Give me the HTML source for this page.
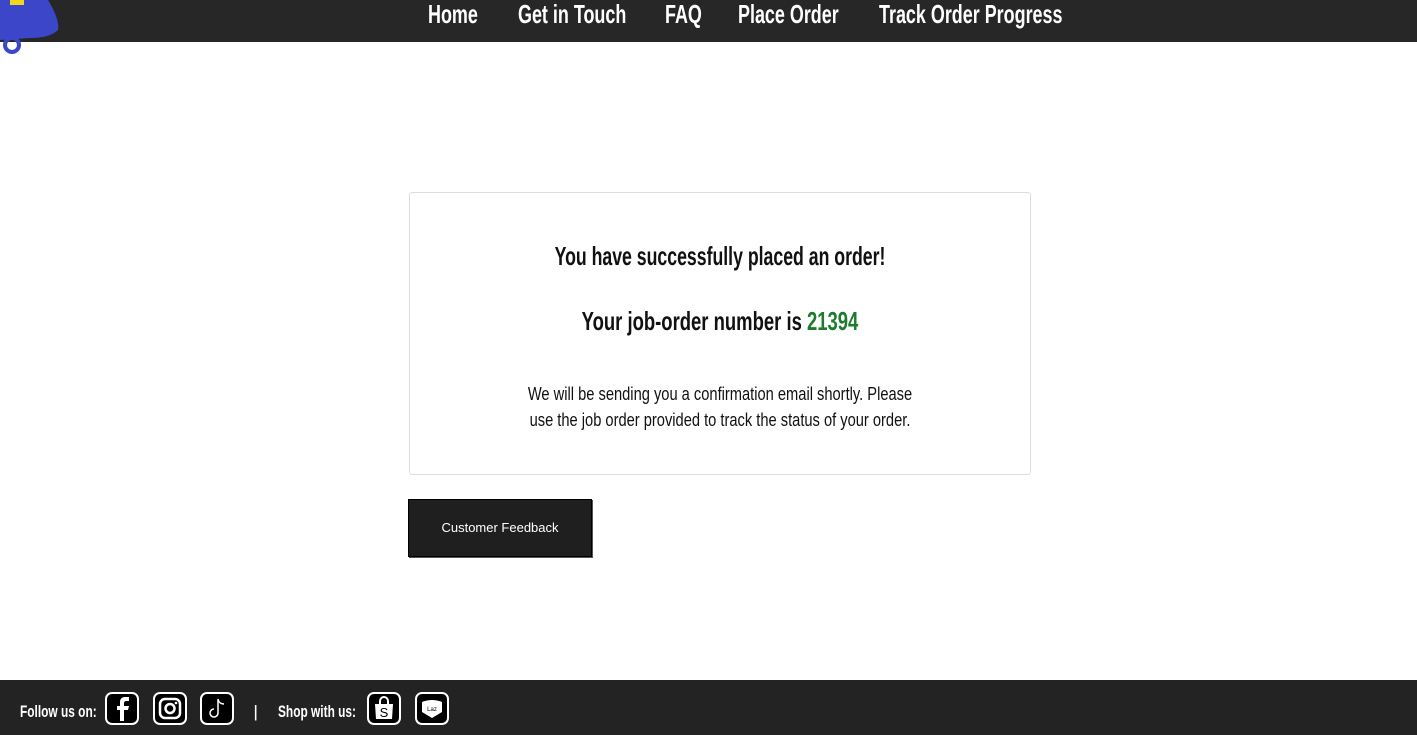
<!DOCTYPE html>
<html><head><style>
body{margin:0;width:1417px;height:735px;background:#fff;position:relative;overflow:hidden;font-family:"Liberation Sans",sans-serif;}
.hdr{position:absolute;left:0;top:0;width:1417px;height:42px;background:#272727;}
.nav{position:absolute;top:-1px;height:30px;line-height:30px;color:#fff;font-weight:bold;font-size:26px;transform:scaleX(0.69);transform-origin:left;white-space:nowrap}
.card{position:absolute;left:409px;top:192px;width:620px;height:281px;border:1px solid #ddd;border-radius:3px;text-align:center;color:#111;}
.c{position:absolute;left:0;width:100%;transform:scaleX(0.72);transform-origin:center;white-space:nowrap}
.t1{top:48px;font-size:26px;font-weight:bold;transform:scaleX(0.68)}
.t2{top:113px;font-size:26px;font-weight:bold;transform:scaleX(0.71)}
.t3{top:188px;font-size:18px;line-height:26px;transform:scaleX(0.815)}
.btn{position:absolute;left:408px;top:499px;width:182px;height:56px;background:#1f1f1f;border:1px solid #000;color:#fff;font-size:13px;line-height:56px;text-align:center;box-shadow:1px 1px 0 #555}
.ftr{position:absolute;left:0;top:680px;width:1417px;height:55px;background:#232323;color:#fff;font-weight:bold;font-size:17px}
.fl{position:absolute;top:22px;transform:scaleX(0.7);transform-origin:left;white-space:nowrap}
.ic{position:absolute;top:692px;width:34px;height:33px;border:2px solid #fff;border-radius:7px;box-sizing:border-box;background:#000}
</style></head><body>
<div class="hdr"></div>
<svg style="position:absolute;left:0;top:0" width="64" height="56"><path d="M0 0 H48 Q60 20 58 30 Q50 38 30 38 L0 40Z" fill="#3b46c9"/><rect x="10" y="0" width="14" height="5" fill="#f2d51d"/><circle cx="12" cy="45" r="7" fill="none" stroke="#3b46c9" stroke-width="4"/></svg>
<div class="nav" style="left:428px">Home</div>
<div class="nav" style="left:518px">Get in Touch</div>
<div class="nav" style="left:665px">FAQ</div>
<div class="nav" style="left:738px">Place Order</div>
<div class="nav" style="left:879px">Track Order Progress</div>
<div class="card">
<div class="c t1">You have successfully placed an order!</div>
<div class="c t2">Your job-order number is <span style="color:#1e7b2e">21394</span></div>
<div class="c t3">We will be sending you a confirmation email shortly. Please<br>use the job order provided to track the status of your order.</div>
</div>
<div class="btn">Customer Feedback</div>
<div class="ftr">
<div class="fl" style="left:20px">Follow us on:</div>
<div class="fl" style="left:254px">|</div>
<div class="fl" style="left:278px">Shop with us:</div>
</div>
<div class="ic" style="left:105px"><svg width="30" height="29"><path d="M17 27V16h4l1-4h-5V9c0-1 1-2 2-2h3V3h-4c-3 0-5 2-5 5v4h-3v4h3v11z" fill="#fff"/></svg></div>
<div class="ic" style="left:153px"><svg width="30" height="29"><rect x="5" y="5" width="20" height="19" rx="5" fill="none" stroke="#fff" stroke-width="2.5"/><circle cx="15" cy="14.5" r="4.5" fill="none" stroke="#fff" stroke-width="2.5"/><circle cx="21" cy="9" r="1.3" fill="#fff"/></svg></div>
<div class="ic" style="left:200px"><svg width="30" height="29"><path d="M16 5v14a4 4 0 1 1-4-4M16 5c1 4 3 5 6 5" fill="none" stroke="#fff" stroke-width="1.5"/></svg></div>
<div class="ic" style="left:367px"><svg width="30" height="29"><path d="M6 10h18l-1 15H7z" fill="#fff"/><path d="M11 10V7a4 4 0 0 1 8 0v3" fill="none" stroke="#fff" stroke-width="2"/><text x="15" y="23" font-size="13" text-anchor="middle" fill="#000" font-family="Liberation Sans">S</text></svg></div>
<div class="ic" style="left:415px"><svg width="30" height="29"><path d="M5 8q10-4 20 0v10l-10 6-10-6z" fill="#fff"/><text x="15" y="17" font-size="6" text-anchor="middle" fill="#000" font-family="Liberation Sans">Laz</text></svg></div>
</body></html>
